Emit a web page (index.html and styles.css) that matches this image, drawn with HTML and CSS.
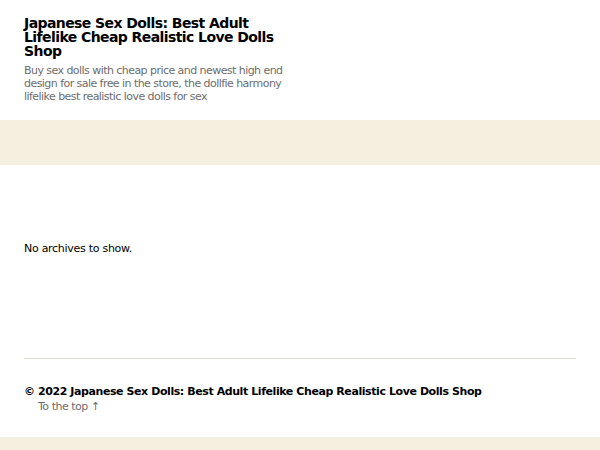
FILE: index.html
```html
<!DOCTYPE html>
<html lang="en">
<head>
    <meta charset="UTF-8">
    <meta name="viewport" content="width=device-width, initial-scale=1.0">
    <title>Japanese Sex Dolls: Best Adult Lifelike Cheap Realistic Love Dolls Shop</title>
    <link rel="stylesheet" href="styles.css">
</head>
<body>
    <header class="site-header">
        <div class="header-inner">
            <h1 class="site-title"><a href="#">Japanese Sex Dolls: Best Adult Lifelike Cheap Realistic Love Dolls Shop</a></h1>
            <p class="site-description">Buy sex dolls with cheap price and newest high end design for sale free in the store, the dollfie harmony lifelike best realistic love dolls for sex</p>
        </div>
    </header>

    <div class="menu-band"></div>

    <main class="site-main">
        <p>No archives to show.</p>
    </main>

    <footer class="site-footer">
        <hr class="footer-rule">
        <div class="footer-credits">
            <p class="copyright">&copy; 2022 <a href="#">Japanese Sex Dolls: Best Adult Lifelike Cheap Realistic Love Dolls Shop</a></p>
            <a class="to-top" href="#">To the top <span class="arrow">&uarr;</span></a>
        </div>
    </footer>

    <div class="bottom-band"></div>
</body>
</html>
```

FILE: styles.css
```css
body {
    margin: 0;
    font-family: "DejaVu Sans", Verdana, sans-serif;
    letter-spacing: -0.03em;
    color: #000000;
    background-color: #ffffff;
}
a {
    color: inherit;
    text-decoration: none;
}
.site-header {
    height: 120px;
    box-sizing: border-box;
    padding: 16px 24px 0;
}
.header-inner {
    width: 265px;
}
.site-title {
    margin: 0;
    font-size: 14px;
    font-weight: bold;
    line-height: 14px;
    letter-spacing: -0.0415em;
}
.site-description {
    margin: 6px 0 0;
    font-size: 11px;
    line-height: 13px;
    letter-spacing: -0.05em;
    color: #6d6d6d;
}
.menu-band {
    height: 45px;
    background-color: #f5efe0;
}
.site-main {
    height: 193px;
    box-sizing: border-box;
    padding: 77px 24px 0;
}
.site-main p {
    margin: 0;
    font-size: 11px;
    line-height: 14px;
    letter-spacing: -0.025em;
}
.site-footer {
    padding: 0 24px;
    height: 79px;
}
.footer-rule {
    margin: 0;
    border: none;
    border-top: 1px solid #dedbd2;
}
.footer-credits {
    padding-top: 26px;
}
.copyright {
    margin: 0;
    font-size: 11px;
    font-weight: bold;
    line-height: 14px;
    letter-spacing: -0.038em;
}
.to-top {
    display: block;
    width: max-content;
    margin-left: 14px;
    font-size: 11px;
    line-height: 16px;
    color: #6d6d6d;
}
.bottom-band {
    height: 13px;
    background-color: #f5efe0;
}
```
